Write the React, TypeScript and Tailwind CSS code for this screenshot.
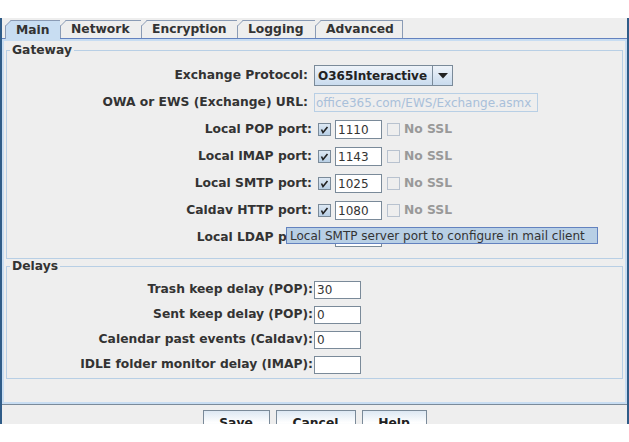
import React from "react";

const FONT = { fontFamily: '"DejaVu Sans", Verdana, sans-serif' };

const tabs = [
  { label: "Main", width: "w-[55px]", active: true },
  { label: "Network", width: "w-[81px]" },
  { label: "Encryption", width: "w-[96px]" },
  { label: "Logging", width: "w-[78px]" },
  { label: "Advanced", width: "w-[88px]", last: true },
];

const ports = [
  { label: "Local POP port:", value: "1110" },
  { label: "Local IMAP port:", value: "1143" },
  { label: "Local SMTP port:", value: "1025" },
  { label: "Caldav HTTP port:", value: "1080" },
  { label: "Local LDAP port:", value: "1389" },
];

const delays = [
  { label: "Trash keep delay (POP):", value: "30" },
  { label: "Sent keep delay (POP):", value: "0" },
  { label: "Calendar past events (Caldav):", value: "0" },
  { label: "IDLE folder monitor delay (IMAP):", value: "" },
];

// corner cut of a metal tab
const TabCorner = () => (
  <svg className="absolute -left-px -top-px" width="6" height="6" viewBox="0 0 6 6">
    <polygon points="0,0 6,0 0,6" fill="#eeeeee" />
    <line x1="0" y1="6.5" x2="6.5" y2="0" stroke="#8a9bb5" strokeWidth="1" />
  </svg>
);

const CheckBox = ({ checked, disabled }: { checked?: boolean; disabled?: boolean }) => (
  <div
    className={`w-[13px] h-[13px] border flex items-center justify-center ${
      disabled ? "border-[#b8c2cf] bg-[#eeeeee]" : "border-[#7a8a99] bg-gradient-to-b from-[#dde8f3] to-[#b8cfe5]"
    }`}
  >
    {checked && (
      <svg width="9" height="9" viewBox="0 0 9 9">
        <path d="M1.5 4.5 L3 7.5 L7.5 2" stroke="#222" strokeWidth="1.6" fill="none" />
      </svg>
    )}
  </div>
);

const TextField = ({ value, h = "h-[19px]" }: { value: string; h?: string }) => (
  <div
    className={`w-[47px] ${h} bg-white border border-[#7a8a99] shadow-[inset_-1px_-1px_0_#ffffff] pl-[2px] text-[12px] leading-none text-[#333] flex items-center`}
  >
    {value}
  </div>
);

export default function App() {
  return (
    <div className="relative w-[629px] h-[442px] bg-white overflow-hidden text-[#333]" style={FONT}>
      <div className="mt-[18px] h-[406px] bg-[#eeeeee] border-x-2 border-[#2f5c88] flex flex-col overflow-hidden">
        {/* tabs */}
        <div className="flex pl-[3px] pt-[2px] h-[20px] shrink-0">
          {tabs.map((t) => (
            <div
              key={t.label}
              className={`relative ${t.width} flex items-center pl-[10px] text-[12.3px] font-bold border-t border-l border-[#8a9bb5] ${
                t.last ? "border-r" : ""
              } ${t.active ? "h-[19px] bg-[#c8ddf2] z-10" : "h-[18px] bg-[#eeeeee]"}`}
            >
              <TabCorner />
              {t.label}
            </div>
          ))}
        </div>

        {/* panel */}
        <div className="h-[367px] shrink-0 border-t border-t-[#6382bf] border-b border-b-[#7a8a99]">
          <div className="h-full border-2 border-[#c8ddf2] px-[2px] pt-[2px]">
            <fieldset className="border border-[#b8cfe5] pb-[7px]">
              <legend className="ml-[3px] px-[2px] text-[12.3px] leading-[14px] font-bold">Gateway</legend>
              <div className="pt-[5px] flex flex-col text-[12.3px] font-bold">
                <div className="h-[27px] flex items-center">
                  <div className="w-[301px] text-right">Exchange Protocol:</div>
                  <div className="ml-[6px] w-[139px] h-[21px] flex border border-[#7a8a99] bg-gradient-to-b from-[#eef3f9] to-[#c9dbee]">
                    <div className="flex-1 flex items-center pl-[3px] border-r border-[#7a8a99] text-[12px] text-[#222]">
                      O365Interactive
                    </div>
                    <div className="w-[19px] flex items-center justify-center">
                      <svg width="10" height="6" viewBox="0 0 10 6">
                        <polygon points="0,0 10,0 5,5.5" fill="#222" />
                      </svg>
                    </div>
                  </div>
                </div>
                <div className="h-[27px] flex items-center">
                  <div className="w-[301px] text-right">OWA or EWS (Exchange) URL:</div>
                  <div className="ml-[6px] w-[224px] h-[19px] border border-[#b8cfe5] bg-[#eeeeee] pl-[1px] flex items-center font-normal text-[12px] text-[#a9c0da]">
                    office365.com/EWS/Exchange.asmx
                  </div>
                </div>
                {ports.map((p) => (
                  <div key={p.label} className="h-[27px] flex items-center">
                    <div className="w-[305px] text-right">{p.label}</div>
                    <div className="ml-[6px]">
                      <CheckBox checked />
                    </div>
                    <div className="ml-[4px] font-normal">
                      <TextField value={p.value} />
                    </div>
                    <div className="ml-[5px]">
                      <CheckBox disabled />
                    </div>
                    <div className="ml-[4px] text-[#999999]">No SSL</div>
                  </div>
                ))}
              </div>
            </fieldset>

            <fieldset className="border border-[#b8cfe5] pb-[1px]">
              <legend className="ml-[3px] px-[2px] text-[12.3px] leading-[14px] font-bold">Delays</legend>
              <div className="pt-[4px] flex flex-col text-[12.3px] font-bold">
                {delays.map((d) => (
                  <div key={d.label} className="h-[25px] flex items-center">
                    <div className="w-[306px] text-right">{d.label}</div>
                    <div className="ml-[1px] font-normal">
                      <TextField value={d.value} h="h-[18px]" />
                    </div>
                  </div>
                ))}
              </div>
            </fieldset>
          </div>
        </div>

        {/* buttons */}
        <div className="flex justify-center gap-[6px] pt-[5px]">
          {[
            { label: "Save", w: "w-[67px]" },
            { label: "Cancel", w: "w-[80px]" },
            { label: "Help", w: "w-[65px]" },
          ].map((b) => (
            <div
              key={b.label}
              className={`${b.w} h-[26px] shrink-0 border border-[#7a8a99] bg-gradient-to-b from-[#dde8f3] via-white to-[#b8cfe5] flex items-center justify-center text-[12.3px] font-bold text-[#222]`}
            >
              {b.label}
            </div>
          ))}
        </div>
      </div>

      {/* tooltip */}
      <div className="absolute left-[286px] top-[227px] w-[312px] h-[17px] bg-[#b8cfe5] border border-[#6382bf] pl-[3px] flex items-center text-[12px] text-[#333]">
        Local SMTP server port to configure in mail client
      </div>
    </div>
  );
}
